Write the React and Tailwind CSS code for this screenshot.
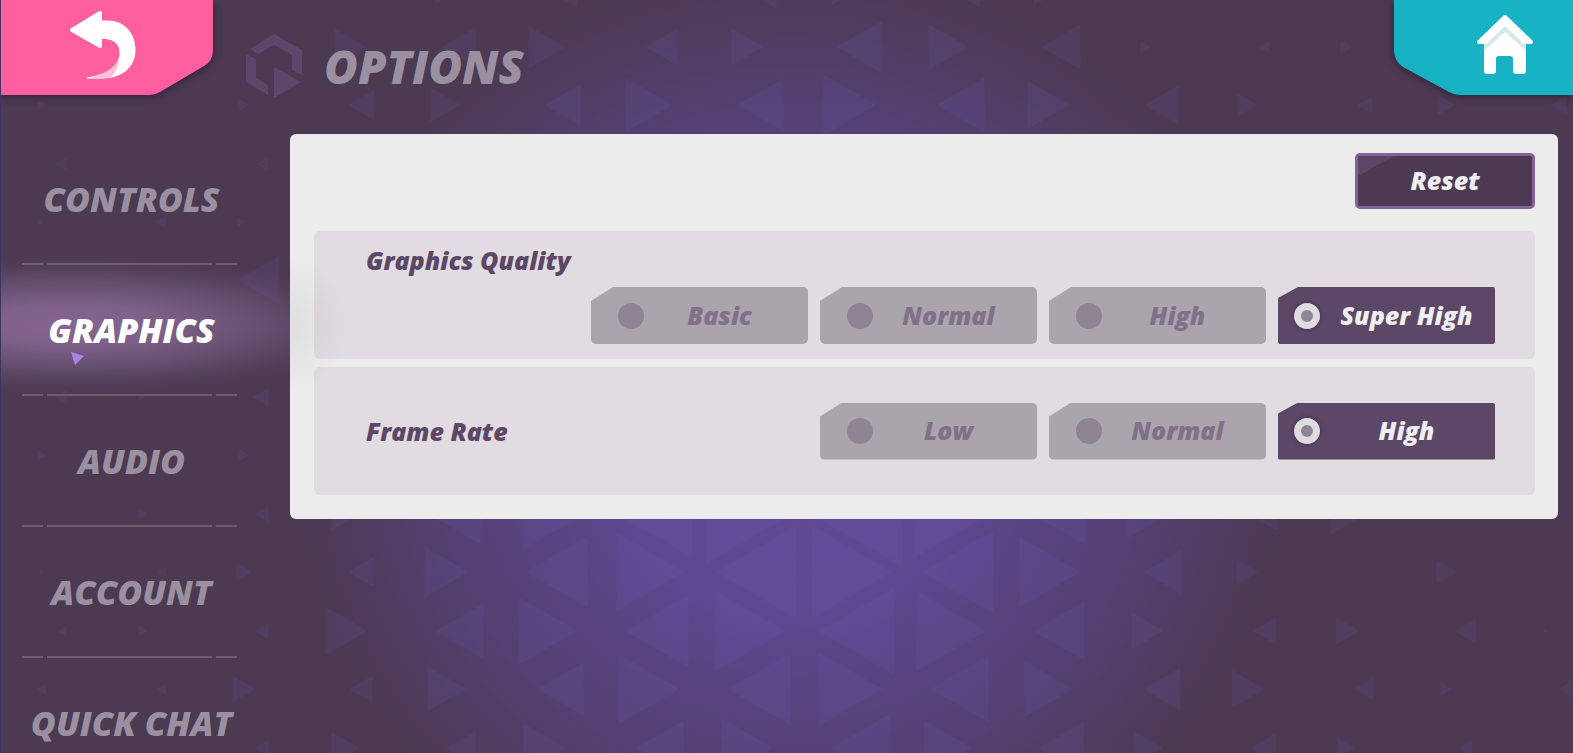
import { useState } from "react";

// [x of the upright edge, centre y, width], negative width points left
const TRIANGLES = [
  [831, -12, 30], [979, -12, -34], [1033, -12, 30], [577, -12, -34], [435, -12, 28], [776, -12, -36],
  [334, 47, 32], [475, 47, -34], [528, 47, 37], [677, 47, -32], [731, 47, 32], [882, 47, -46],
  [928, 47, 40], [1080, 47, -39], [1140, 47, 11], [1269, 47, -11], [1340, 47, 12],
  [37, 105, 8], [237, 105, 12], [374, 105, -27], [430, 105, 30], [580, 105, -36], [625, 105, 47],
  [783, 105, -46], [823, 105, 53], [984, 105, -48], [1027, 105, 42], [1178, 105, -34], [1237, 105, 20],
  [1372, 105, -15], [1437, 105, 18], [1566, 105, -16],
  [66, 164, -12], [267, 164, -11],
  [38, 222, 5], [166, 222, -12], [237, 222, 9],
  [279, 280, -42],
  [67, 397, -13], [138, 397, 7], [268, 397, -16],
  [37, 455, 9], [237, 455, 12],
  [138, 514, 9], [268, 514, -14], [331, 514, 28], [482, 514, -54], [522, 514, 62], [692, 514, -76],
  [706, 514, 86], [902, 514, -92], [912, 514, 78], [1085, 514, -54], [1127, 514, 42], [1277, 514, -29], [1330, 514, 36],
  [39, 572, 6], [166, 572, -9], [236, 572, 15], [373, 572, -25], [424, 572, 44], [587, 572, -62],
  [616, 572, 68], [796, 572, -81], [811, 572, 81], [993, 572, -72], [1019, 572, 61], [1181, 572, -38],
  [1236, 572, 22], [1367, 572, -2], [1436, 572, 21],
  [66, 631, -9], [138, 631, 10], [268, 631, -14], [325, 631, 42], [483, 631, -48], [519, 631, 58],
  [688, 631, -63], [714, 631, 71], [894, 631, -76], [916, 631, 70], [1084, 631, -51], [1131, 631, 32],
  [1275, 631, -23], [1335, 631, 24], [1475, 631, -21], [1543, 631, 5],
  [46, 689, -10], [166, 689, -10], [232, 689, 23], [372, 689, -23], [427, 689, 39], [583, 689, -46],
  [618, 689, 61], [790, 689, -63], [818, 689, 64], [988, 689, -58], [1024, 689, 49], [1180, 689, -37],
  [1231, 689, 33], [1373, 689, -19], [1440, 689, 12], [1572, 689, -14],
  [268, 748, -14], [331, 748, 28], [475, 748, -29], [523, 748, 43], [683, 748, -48], [721, 748, 52],
  [890, 748, -60], [924, 748, 48], [1083, 748, -45], [1133, 748, 29], [1275, 748, -25], [1337, 748, 17], [1472, 748, -14],
];

const MENU = ["Controls", "Graphics", "Audio", "Account", "Quick Chat"];

const SETTINGS = [
  { name: "quality", label: "Graphics Quality", options: ["Basic", "Normal", "High", "Super High"], stacked: true },
  { name: "frameRate", label: "Frame Rate", options: ["Low", "Normal", "High"] },
];

const DEFAULTS = { quality: "Super High", frameRate: "High" };

function Backdrop() {
  return (
    <svg
      aria-hidden="true"
      className="absolute inset-0 h-full w-full"
      viewBox="0 0 1573 753"
      preserveAspectRatio="xMidYMid slice"
    >
      <defs>
        <radialGradient id="haze">
          <stop offset="0" stopColor="#614b97" />
          <stop offset="0.35" stopColor="#5e4890" />
          <stop offset="0.7" stopColor="#544072" />
          <stop offset="1" stopColor="#4b3a52" />
        </radialGradient>
      </defs>
      <rect width="1573" height="753" fill="#4b3a52" />
      <ellipse cx="790" cy="445" rx="500" ry="480" fill="url(#haze)" />
      <g fill="#755fc8" fillOpacity="0.12">
        {TRIANGLES.map(([x, y, w]) => {
          const h = Math.abs(w) * 0.577;
          return <path key={`${x}-${y}`} d={`M${x} ${y - h}L${x + w} ${y}L${x} ${y + h}Z`} />;
        })}
      </g>
    </svg>
  );
}

function BackButton() {
  return (
    <button type="button" aria-label="Back" className="h-[95px] w-[212px] shrink-0">
      <svg viewBox="0 0 212 95" className="h-full w-full overflow-visible drop-shadow-[0_2px_4px_rgba(30,15,40,0.6)]">
        <path d="M0 0H212V50Q212 61 203 66L159 92Q154 95 149 95H0Z" fill="#ff5e9f" />
        <g fill="#fff" stroke="#fff" strokeLinejoin="round">
          <path d="M71 30L99 13V46Z" strokeWidth="4" />
          <path
            d="M98 21H107C123 21 134 33 134 50C134 67 121 78 101 78H86C106 75 119 66 119 53C119 43 112 38 98 38Z"
            strokeWidth="1"
          />
        </g>
        <path d="M85 79C103 75 115 68 118 57Q118 70 110 77Q104 79 98 79Z" fill="#ffbfd9" />
      </svg>
    </button>
  );
}

function HomeButton() {
  return (
    <button type="button" aria-label="Home" className="ml-auto h-[95px] w-[179px] shrink-0">
      <svg viewBox="0 0 179 95" className="h-full w-full overflow-visible drop-shadow-[0_2px_4px_rgba(30,15,40,0.6)]">
        <path d="M0 0V50Q0 61 9 67L55 92Q60 95 66 95H179V0Z" fill="#17b3c5" />
        <path
          d="M90 48L111 28L132 48V71Q132 74 129 74H122Q119 74 119 71V59Q119 56 116 56H105Q102 56 102 59V71Q102 74 99 74H93Q90 74 90 71Z"
          fill="#fff"
        />
        <path d="M90 41L111 22L132 41V51L111 32L90 51Z" fill="#d6e9ec" />
        <path d="M111 17L137 42H131L111 23L91 42H85Z" fill="#fff" stroke="#fff" strokeWidth="4" strokeLinejoin="round" />
      </svg>
    </button>
  );
}

function Logo() {
  return (
    <svg aria-hidden="true" viewBox="0 0 56 64" className="h-16 w-14 shrink-0" fill="#5b476c">
      <path d="M28 0L56 16V41L46 36V21L28 11L12 20L4 15Z" />
      <path d="M0 20L10 25V44L22 51V61L0 48Z" />
      <path d="M28 33L55 48L28 64Z" />
    </svg>
  );
}

function MenuItem({ label, active, onClick }) {
  return (
    <button
      type="button"
      onClick={onClick}
      aria-current={active ? "page" : undefined}
      className="relative flex h-[129px] w-full items-center justify-center"
    >
      {active && (
        <span className="absolute -left-[270px] -top-2.5 h-[140px] w-[640px] bg-[radial-gradient(closest-side,rgba(136,104,148,0.95),rgba(136,104,148,0.82)_30%,rgba(136,104,148,0.4)_62%,rgba(136,104,148,0.12)_82%,transparent)]" />
      )}
      <span
        className={`relative pl-1 whitespace-nowrap text-[34px] leading-10 uppercase ${active ? "text-white" : "text-[#9a90a0]"}`}
      >
        {label}
      </span>
      {active && (
        <svg aria-hidden="true" viewBox="0 0 14 13" className="absolute left-[49px] top-[87px] h-[13px] w-3.5">
          <path d="M0 0L13 4L4 13Z" fill="#ab85df" />
        </svg>
      )}
    </button>
  );
}

function Divider() {
  return (
    <div className="relative flex h-0.5 gap-1">
      <span className="w-[21px] bg-[#6b5d6f]" />
      <span className="flex-1 bg-[#6b5d6f]" />
      <span className="w-[21px] bg-[#6b5d6f]" />
    </div>
  );
}

function Option({ name, value, checked, onChange }) {
  return (
    <label
      className={`flex h-[57px] w-[217px] cursor-pointer items-center pr-4 ${
        checked
          ? "rounded-xs bg-[#5c4767] text-[#f0eef2] [clip-path:polygon(20px_0,100%_0,100%_100%,0_100%,0_11px)]"
          : "rounded-[5px] bg-[#aaa5ac] text-[#81708a] [clip-path:polygon(22px_0,100%_0,100%_100%,0_100%,0_14px)]"
      }`}
    >
      <span className={`flex w-14 shrink-0 ${checked ? "pl-4" : "pl-[27px]"}`}>
        <input
          type="radio"
          name={name}
          value={value}
          checked={checked}
          onChange={() => onChange(value)}
          className={`size-[26px] shrink-0 appearance-none rounded-full bg-[#8f8494] ${
            checked ? "border-7 border-[#dfdce1] shadow-[0_0_4px_rgba(40,20,50,0.5)]" : ""
          }`}
        />
      </span>
      <span className="flex-1 whitespace-nowrap text-center">{value}</span>
    </label>
  );
}

function SettingRow({ setting, value, onChange }) {
  const { name, label, options, stacked } = setting;
  return (
    <div
      role="radiogroup"
      aria-labelledby={`${name}-label`}
      className={`flex min-h-32 rounded-md bg-[#7d5082]/10 pr-10 pl-[52px] ${
        stacked ? "flex-col gap-2.5 pt-3" : "items-center justify-between"
      }`}
    >
      <h2 id={`${name}-label`} className="leading-[34px] text-[#5c4767]">{label}</h2>
      <div className="flex justify-end gap-3">
        {options.map((option) => (
          <Option
            key={option}
            name={name}
            value={option}
            checked={value === option}
            onChange={(v) => onChange(name, v)}
          />
        ))}
      </div>
    </div>
  );
}

export default function App() {
  const [page, setPage] = useState("Graphics");
  const [values, setValues] = useState(DEFAULTS);

  const handleChange = (name, value) => setValues((prev) => ({ ...prev, [name]: value }));

  return (
    <div className="relative h-screen overflow-hidden border-l border-[#3b3560] bg-[#4b3a52] font-['Open_Sans',sans-serif] text-[25px] font-extrabold italic">
      <Backdrop />

      <header className="relative flex h-[134px] items-start">
        <BackButton />
        <div className="flex items-center gap-[22px] pt-[34px] pl-[33px]">
          <Logo />
          <h1 className="text-[46px] leading-[64px] text-[#9a90a0]">OPTIONS</h1>
        </div>
        <HomeButton />
      </header>

      <main className="relative flex items-start">
        <nav className="w-[289px] shrink-0 pr-[53px] pl-[21px]">
          {MENU.map((item, i) => (
            <div key={item}>
              {i > 0 && <Divider />}
              <MenuItem label={item} active={page === item} onClick={() => setPage(item)} />
            </div>
          ))}
        </nav>

        <section className="relative mr-[15px] flex-1 rounded-md bg-[#ececec] bg-[radial-gradient(60px_70px_at_0_190px,rgba(75,58,82,0.08),transparent)] pt-[19px] pr-[23px] pb-6 pl-6">
          <div className="flex justify-end">
            <button
              type="button"
              onClick={() => setValues(DEFAULTS)}
              className="relative h-14 w-[180px] rounded-[5px] border-3 border-[#84619a] bg-[#4b3a52] text-[#f0eef2]"
            >
              <span className="absolute top-0 left-0 h-5 w-9 bg-[#5b4667] [clip-path:polygon(0_0,100%_0,0_100%)]" />
              <span className="relative">Reset</span>
            </button>
          </div>
          <div className="mt-[22px] flex flex-col gap-2">
            {SETTINGS.map((setting) => (
              <SettingRow
                key={setting.name}
                setting={setting}
                value={values[setting.name]}
                onChange={handleChange}
              />
            ))}
          </div>
        </section>
      </main>
    </div>
  );
}
